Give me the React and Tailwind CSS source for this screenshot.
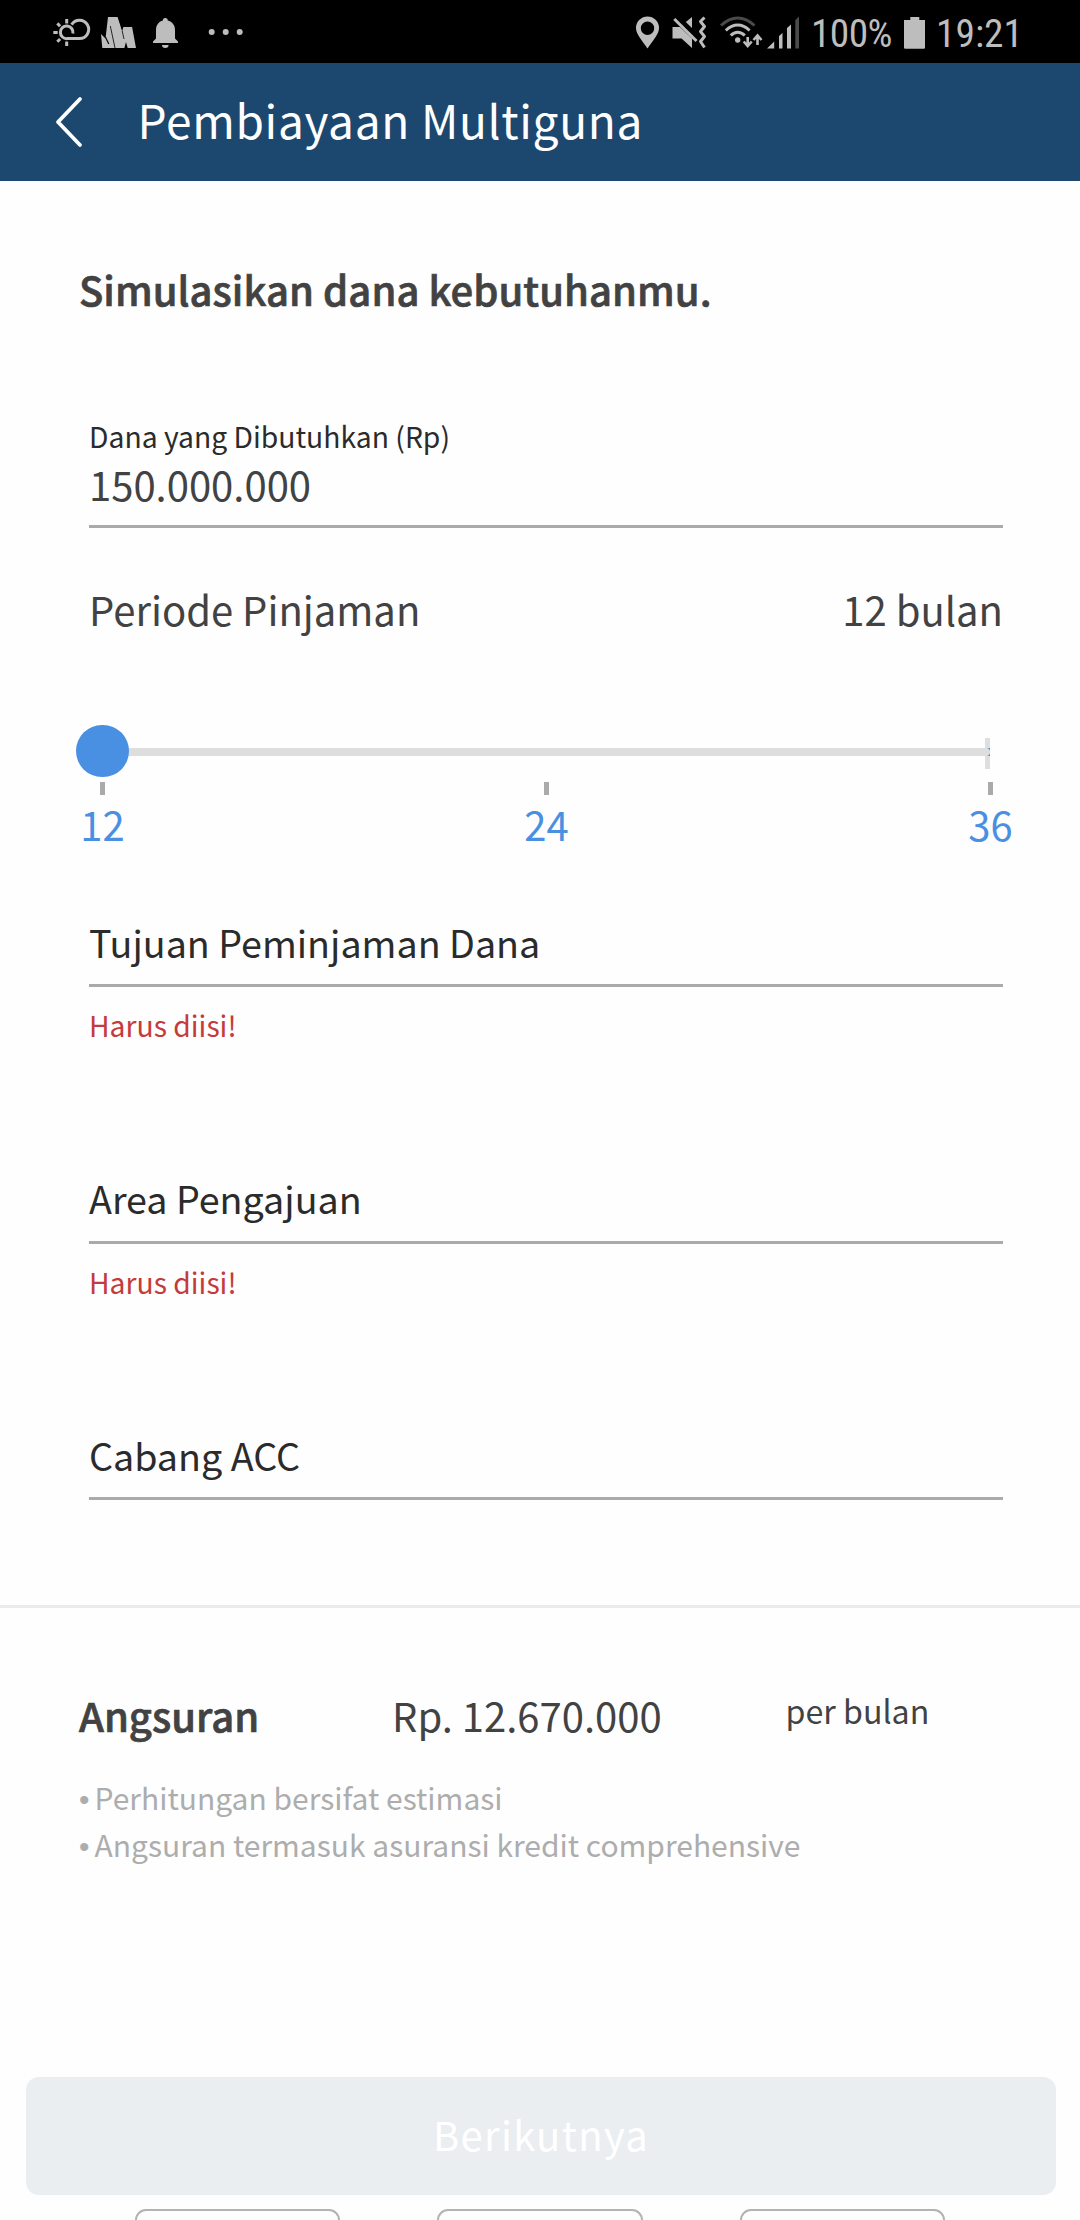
const GREY = "#bdbdbd";

function WeatherIcon() {
  return (
    <svg className="mr-2 h-[63px] w-10" viewBox="52 0 40 63" fill="none" stroke={GREY} strokeWidth="3">
      <path d="M71.6 24.6A9.2 9.2 0 1 1 79.6 38.6H67.3A6.3 6.3 0 1 1 72.9 33.4" />
      <path d="M66.7 19v4.4M66.7 41.6v4.4M53.3 32.6h4.4M57.3 23.4l2.8 2.8M57.3 41.8l2.8-2.8" />
    </svg>
  );
}

function PeaksIcon() {
  return (
    <svg className="mr-[15px] h-[63px] w-[37px]" viewBox="100 0 37 63">
      <path fill={GREY} d="M101 34l4.500 4.500L108 17h9.600l4.600 14.500L123.300 27h8.800L136 48h-8.300l-1.700-6-1.600 6H102.300z" />
      <path stroke="#000" strokeWidth="0.8" d="M110.300 26l4.700 22M122.200 31l1.800 8" fill="none" />
      <path stroke="#000" strokeWidth="1.2" d="M105.400 37l3.400 7" fill="none" />
    </svg>
  );
}

function BellIcon() {
  return (
    <svg className="mr-[27px] h-[63px] w-7" viewBox="152 0 28 63" fill={GREY}>
      <path d="M165.3 18a2.4 2.4 0 0 1 2.4 2.6c4.7 1.2 7.3 4.7 7.3 9.4v8.5l3 3V43h-25v-1.5l3-3V30c0-4.700 2.500-8.200 6.900-9.400A2.400 2.400 0 0 1 165.300 18zM162 45h6.600a3.300 3 0 0 1-6.600 0z" />
    </svg>
  );
}

function DotsIcon() {
  return (
    <svg className="h-[63px] w-[37px]" viewBox="207 0 37 63" fill={GREY}>
      <circle cx="211.700" cy="32" r="3" />
      <circle cx="225.700" cy="32" r="3" />
      <circle cx="239.700" cy="32" r="3" />
    </svg>
  );
}

function PinIcon() {
  return (
    <svg className="mr-[11px] h-[63px] w-[25px]" viewBox="635 0 25 63">
      <path fill={GREY} fillRule="evenodd" d="M647.500 16.500A11.500 11.500 0 0 1 659 28C659 34.500 653 40 647.500 48.500C642 40 636 34.500 636 28A11.500 11.500 0 0 1 647.500 16.500zM647.500 21.500a6.700 6.700 0 1 0 0 13.400a6.700 6.700 0 1 0 0-13.400z" />
    </svg>
  );
}

function MuteVibrateIcon() {
  return (
    <svg className="mr-3 h-[63px] w-9" viewBox="671 0 36 63">
      <path fill={GREY} d="M672.500 27h7.500L692 38.500V48l-10.500-9.500h-9zM692 17v11l-6.200-6z" />
      <path stroke="#000" strokeWidth="2" d="M676.500 17l22 22" />
      <path stroke={GREY} strokeWidth="3" d="M674.300 19l22.200 22" />
      <path fill="none" stroke={GREY} strokeWidth="3" d="M704.500 17.500l-4 4 4 5-4 5 4 5-4 5 4 6" strokeLinejoin="round" />
    </svg>
  );
}

function WifiIcon() {
  return (
    <svg className="mr-[3px] h-[63px] w-11" viewBox="719 0 44 63" fill="none" stroke={GREY} strokeWidth="3">
      <path stroke="#4a4a4a" d="M721 25.500Q729 18 737.700 18T754.500 25.500" />
      <path d="M725.800 30.500Q731.500 25 737.700 25T749.600 30.500M730.800 35.500Q734 32.300 737.700 32.300T744.800 35.500" />
      <circle cx="737.700" cy="40" r="2.700" fill={GREY} stroke="none" />
      <path d="M747.700 37v9M743.700 41.500l4 4.500 4-4.500M757.500 45v-9M753.500 40l4-4.500 4 4.500" strokeWidth="2.600" />
    </svg>
  );
}

function SignalIcon() {
  return (
    <svg className="mr-[11px] h-[63px] w-[34px]" viewBox="766 0 34 63" fill={GREY}>
      <path d="M767 48.500l7.200-7v7zM779 36l3.500-3v15.500H779zM787 28l4-3.500v24h-4z" />
      <path fill="#4a4a4a" d="M795.300 20l3.700-3.500v32h-3.700z" />
    </svg>
  );
}

function BatteryIcon() {
  return (
    <svg className="h-[63px] w-[23px]" viewBox="903 0 23 63" fill={GREY}>
      <path d="M910.300 17h9v3h5.700v27.500q0 1.200-1.200 1.200h-18.600q-1.200 0-1.200-1.200V20h6.300z" />
    </svg>
  );
}

function StatusBar() {
  return (
    <div className="flex h-[63px] shrink-0 items-center bg-black pl-[52px] font-['Roboto_Condensed','Roboto',sans-serif] text-[39.4px] leading-[63px] text-[#bdbdbd]">
      <WeatherIcon />
      <PeaksIcon />
      <BellIcon />
      <DotsIcon />
      <div className="ml-auto flex w-[445px] items-center">
        <PinIcon />
        <MuteVibrateIcon />
        <WifiIcon />
        <SignalIcon />
        <span className="w-[92px] pt-[3px] tracking-[-0.6px] whitespace-nowrap">100%</span>
        <BatteryIcon />
        <span className="ml-2.5 pt-[3px] whitespace-nowrap">19:21</span>
      </div>
    </div>
  );
}

function Header() {
  return (
    <header className="flex h-[118px] shrink-0 items-center bg-[#1c486f] pl-[54px] text-white">
      <svg className="h-[54px] w-[30px]" viewBox="0 0 30 54" fill="none" stroke="currentColor" strokeWidth="3.800" strokeLinecap="round" strokeLinejoin="round">
        <path d="M26 4L4 27l22 23" />
      </svg>
      <h1 className="ml-[53.5px] pb-1.5 text-[46px] leading-[66px] tracking-[0.67px]">Pembiayaan Multiguna</h1>
    </header>
  );
}

const STOPS = [12, 24, 36];

function PeriodSlider() {
  return (
    <div>
      <div className="relative mt-[86px] ml-[76px] h-[52px] w-[914px]">
        <div className="absolute top-[13px] right-0 h-[31px] w-[5px] bg-[#dedede]" />
        <div className="absolute top-[23px] right-0 h-2 w-[3px] bg-[#4990e2]" />
        <div className="absolute top-[23px] right-0 left-6 h-2 rounded-r-[4px] bg-[#dedede]" />
        <div className="absolute top-0 left-0 h-[52px] w-[53px] rounded-full bg-[#4990e2]" />
      </div>
      <div className="mt-[5px] ml-20 flex w-[933px] justify-between">
        {STOPS.map((stop) => (
          <div key={stop} className="flex w-[45px] flex-col items-center">
            <div className="h-[13px] w-[5px] bg-[#aaaaaa]" />
            <span className="mt-1 text-[40px] leading-[50px] text-[#4990e2]">{stop}</span>
          </div>
        ))}
      </div>
    </div>
  );
}

function SelectField({ label, error, className, labelClassName }) {
  return (
    <div className={className}>
      <div className={`border-b-[3px] border-[#aaaaaa] text-[37.65px] leading-[51px] text-[#2b2b2b] ${labelClassName}`}>{label}</div>
      {error && <p className="mt-[17px] text-[28.3px] leading-[41px] text-[#c53a3a]">{error}</p>}
    </div>
  );
}

function Note({ children }) {
  return (
    <li className="flex">
      <span className="w-[15.5px] pt-[5px] font-['Liberation_Sans',sans-serif] text-[30px] leading-[42px]">•</span>
      {children}
    </li>
  );
}

export default function App() {
  return (
    <div className="flex h-[2220px] w-[1080px] flex-col overflow-hidden bg-[#fefefe] font-['Noto_Sans_CJK_SC',sans-serif] text-[#424242]">
      <StatusBar />
      <Header />
      <main className="min-h-0 flex-1 overflow-hidden">
        <h2 className="mt-[78px] ml-[79px] text-[40px] leading-[60px] font-medium tracking-[0.05px] [-webkit-text-stroke:0.7px_#424242]">Simulasikan dana kebutuhanmu.</h2>
        <section className="mt-24 ml-[89px] w-[914px]">
          <div className="border-b-[3px] border-[#aaaaaa] pb-[13px]">
            <div className="text-[28.3px] leading-[41px] text-[#2b2b2b]">Dana yang Dibutuhkan (Rp)</div>
            <div className="text-[40px] leading-[56px]">150.000.000</div>
          </div>
          <div className="mt-[51px] flex justify-between text-[40px] leading-[60px]">
            <span>Periode Pinjaman</span>
            <span>12 bulan</span>
          </div>
        </section>
        <PeriodSlider />
        <section className="mt-[67px] ml-[89px] w-[914px]">
          <SelectField className="h-[256px]" labelClassName="pb-[17px]" label="Tujuan Peminjaman Dana" error="Harus diisi!" />
          <SelectField className="h-[257px]" labelClassName="pb-[18px]" label="Area Pengajuan" error="Harus diisi!" />
          <SelectField className="h-[176px]" labelClassName="pb-[17px]" label="Cabang ACC" />
        </section>
        <section className="border-t-[3px] border-[#ebebeb] pt-[77px] pl-[79px]">
          <div className="grid grid-cols-[313px_393.5px_auto] text-[40px] leading-[60px]">
            <span className="font-medium [-webkit-text-stroke:0.7px_#424242]">Angsuran</span>
            <span>Rp. 12.670.000</span>
            <span className="-mt-[5px] text-[32.2px]">per bulan</span>
          </div>
          <ul className="mt-[29px] text-[30px] leading-[47px] text-[#adadad]">
            <Note>Perhitungan bersifat estimasi</Note>
            <Note>Angsuran termasuk asuransi kredit comprehensive</Note>
          </ul>
        </section>
        <button className="mt-[209px] ml-[26px] flex h-[118px] w-[1030px] items-center justify-center rounded-[13px] bg-[#eaeef1] pb-1 text-[40px] leading-[60px] tracking-[1.35px] text-white">
          Berikutnya
        </button>
        <div className="mt-3.5 ml-[134.5px] flex gap-[97px]">
          <div className="h-[60px] w-[205.500px] rounded-[11px] border-2 border-[#b3b3b3]" />
          <div className="h-[60px] w-[205.500px] rounded-[11px] border-2 border-[#b3b3b3]" />
          <div className="h-[60px] w-[205.500px] rounded-[11px] border-2 border-[#b3b3b3]" />
        </div>
      </main>
    </div>
  );
}
